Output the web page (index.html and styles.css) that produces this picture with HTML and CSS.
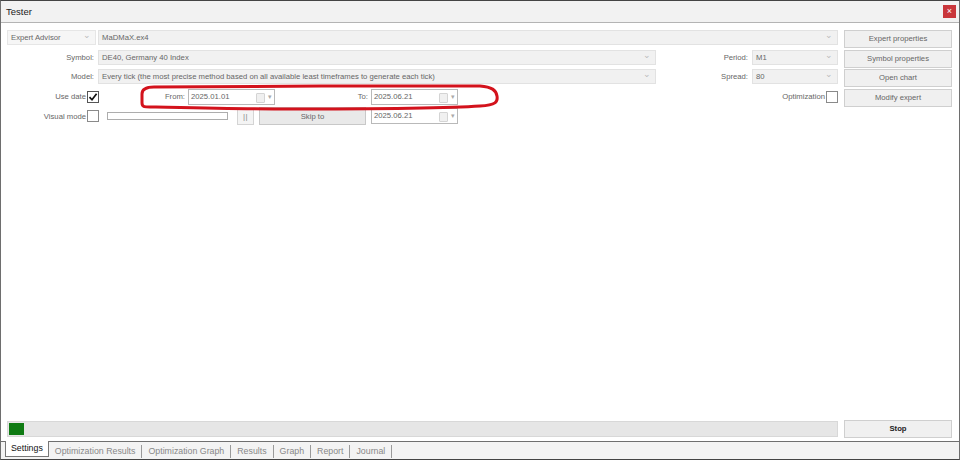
FILE: index.html
```html
<!DOCTYPE html>
<html>
<head>
<meta charset="utf-8">
<link rel="stylesheet" href="styles.css">
</head>
<body>
<div class="window">
  <div class="titlebar">
    <span class="title">Tester</span>
    <span class="close">×</span>
  </div>
  <div class="content">
    <div class="top">
      <div class="form">
        <div class="row">
          <div class="select type">Expert Advisor<span class="chev">⌄</span></div>
          <div class="select ea">MaDMaX.ex4<span class="chev">⌄</span></div>
        </div>
        <div class="row">
          <span class="label lw">Symbol:</span>
          <div class="select wide">DE40, Germany 40 Index<span class="chev">⌄</span></div>
          <span class="label rw">Period:</span>
          <div class="select small">M1<span class="chev">⌄</span></div>
        </div>
        <div class="row">
          <span class="label lw">Model:</span>
          <div class="select wide">Every tick (the most precise method based on all available least timeframes to generate each tick)<span class="chev">⌄</span></div>
          <span class="label rw">Spread:</span>
          <div class="select small">80<span class="chev">⌄</span></div>
        </div>
        <div class="row">
          <span class="label cw">Use date</span>
          <span class="check checked"><svg width="10" height="10" viewBox="0 0 10 10"><path d="M1.5 5.2 L4 7.8 L8.6 1.8" fill="none" stroke="#111" stroke-width="1.7"/></svg></span>
          <span class="label fromw">From:</span>
          <div class="date">2025.01.01<span class="cal"></span><span class="dd">▾</span></div>
          <span class="label tow">To:</span>
          <div class="date">2025.06.21<span class="cal"></span><span class="dd">▾</span></div>
          <span class="label optw">Optimization</span>
          <span class="check"></span>
        </div>
        <div class="row">
          <span class="label cw">Visual mode</span>
          <span class="check"></span>
          <span class="track"></span>
          <span class="pause">||</span>
          <span class="skip">Skip to</span>
          <div class="date">2025.06.21<span class="cal"></span><span class="dd">▾</span></div>
        </div>
      </div>
      <div class="buttons">
        <span class="btn">Expert properties</span>
        <span class="btn">Symbol properties</span>
        <span class="btn">Open chart</span>
        <span class="btn">Modify expert</span>
      </div>
    </div>
    <div class="bottom">
      <div class="progress"><span class="fill"></span></div>
      <span class="btn stop">Stop</span>
    </div>
  </div>
  <div class="tabs">
    <span class="tab active">Settings</span>
    <span class="tab">Optimization Results</span>
    <span class="tab">Optimization Graph</span>
    <span class="tab">Results</span>
    <span class="tab">Graph</span>
    <span class="tab">Report</span>
    <span class="tab">Journal</span>
  </div>
  <svg class="annot" width="362" height="28" viewBox="0 0 362 28">
    <path d="M14 3 C 6 3, 2 5, 2 10 L 2 19 C 2 24, 6 23, 16 23 C 60 24, 100 25, 140 25 C 220 25, 300 25, 340 22 C 356 21, 358 18, 357 12 C 356 6, 352 3, 340 2 C 250 2, 100 2, 14 3 Z" fill="none" stroke="#d3121c" stroke-width="3"/>
  </svg>
</div>
</body>
</html>
```
FILE: styles.css
```css
html, body {
  margin: 0;
  padding: 0;
  background: #ffffff;
}
body {
  width: 960px;
  height: 460px;
  overflow: hidden;
  font-family: "Liberation Sans", Arial, sans-serif;
  font-size: 7.7px;
  color: #666;
}
.window {
  position: relative;
  box-sizing: border-box;
  width: 960px;
  height: 460px;
  border-left: 1px solid #6e6e6e;
  border-right: 1px solid #6e6e6e;
  border-top: 1px solid #444;
  border-bottom: 1px solid #444;
  display: flex;
  flex-direction: column;
  background: #fff;
}
.titlebar {
  height: 21px;
  flex: none;
  background: #f2f2f2;
  border-bottom: 1px solid #b4b4b4;
  display: flex;
  align-items: center;
  justify-content: space-between;
  padding: 0 3px 0 5px;
}
.title {
  font-size: 9.5px;
  color: #222;
}
.close {
  width: 13px;
  height: 13px;
  background: #c9363b;
  color: #fff;
  font-size: 9px;
  line-height: 12px;
  text-align: center;
}
.content {
  flex: 1;
  display: flex;
  flex-direction: column;
  justify-content: space-between;
  padding: 5px 6px 3px 6px;
}
.top {
  display: flex;
  gap: 6px;
}
.form {
  width: 831px;
  display: flex;
  flex-direction: column;
}
.row {
  height: 19.6px;
  display: flex;
  align-items: center;
}
.select {
  position: relative;
  box-sizing: border-box;
  height: 15px;
  line-height: 13px;
  padding-left: 3px;
  background: #f1f1f1;
  border: 1px solid #e2e2e2;
  color: #666;
  white-space: nowrap;
  overflow: hidden;
}
.select.type {
  width: 89px;
  background: #f6f6f6;
  border-color: #e6e6e6;
}
.select.ea {
  width: 740px;
  margin-left: 2px;
}
.select.wide { width: 558px; }
.select.small { width: 86px; }
.chev {
  position: absolute;
  right: 4px;
  top: -2px;
  color: #bbb;
  font-size: 9px;
}
.label {
  color: #666;
  text-align: right;
  white-space: nowrap;
  box-sizing: border-box;
}
.lw { width: 91px; padding-right: 4px; }
.rw { width: 96px; padding-right: 4px; }
.cw { width: 80px; padding-right: 1px; }
.fromw { width: 89px; padding-right: 3px; }
.tow { width: 96px; padding-right: 3px; }
.optw { flex: 1; padding-right: 1px; }
.check {
  box-sizing: border-box;
  width: 12px;
  height: 12px;
  border: 1px solid #8a8a8a;
  background: #fff;
  display: flex;
  align-items: center;
  justify-content: center;
}
.check.checked { border-color: #555; }
.date {
  position: relative;
  box-sizing: border-box;
  width: 87px;
  height: 16px;
  line-height: 14px;
  padding-left: 2px;
  background: #fff;
  border: 1px solid #b9b9b9;
  color: #666;
}
.cal {
  position: absolute;
  right: 9px;
  top: 3px;
  width: 7px;
  height: 8px;
  border: 1px solid #d4d4d4;
  background: #f0f0f0;
  border-radius: 1px;
}
.dd {
  position: absolute;
  right: 2px;
  top: 0;
  font-size: 7px;
  color: #aaa;
}
.track {
  box-sizing: border-box;
  width: 121px;
  height: 8px;
  margin-left: 8px;
  border: 1px solid #adadad;
  background: #fff;
}
.pause {
  box-sizing: border-box;
  width: 17px;
  height: 17px;
  margin-left: 9px;
  border: 1px solid #d4d4d4;
  background: #f4f4f4;
  color: #888;
  text-align: center;
  line-height: 15px;
  font-size: 8px;
  letter-spacing: 0.5px;
}
.skip {
  box-sizing: border-box;
  width: 107px;
  height: 18px;
  margin-left: 5px;
  margin-right: 5px;
  border: 1px solid #c8c8c8;
  background: #e9e9e9;
  color: #666;
  text-align: center;
  line-height: 17px;
}
.buttons {
  width: 108px;
  display: flex;
  flex-direction: column;
  gap: 1.5px;
  padding-top: 2px;
}
.btn {
  box-sizing: border-box;
  height: 18px;
  border: 1px solid #cfcfcf;
  background: #f0f0f0;
  color: #666;
  text-align: center;
  line-height: 16px;
}
.bottom {
  display: flex;
  align-items: center;
  gap: 6px;
}
.progress {
  box-sizing: border-box;
  width: 831px;
  height: 16px;
  background: #e6e6e6;
  border: 1px solid #d8d8d8;
  padding: 1px;
}
.fill {
  display: block;
  width: 15px;
  height: 100%;
  background: #0f7b13;
}
.stop {
  width: 108px;
  font-weight: bold;
  color: #222;
}
.tabs {
  flex: none;
  height: 17px;
  background: #f3f3f3;
  border-top: 1px solid #6f6f6f;
  display: flex;
  align-items: flex-start;
  padding-left: 4px;
  font-size: 8.8px;
}
.tab {
  color: #888;
  padding: 1px 6px 0 6px;
  border-right: 1px solid #9a9a9a;
  margin-top: 3px;
  height: 12px;
  line-height: 10px;
}
.tab.active {
  background: #fff;
  color: #111;
  border: 1px solid #777;
  border-top: none;
  margin-top: -1px;
  height: 16px;
  line-height: 15px;
  padding: 0 5px;
  box-sizing: border-box;
}
.annot {
  position: absolute;
  left: 139px;
  top: 83px;
}
```
